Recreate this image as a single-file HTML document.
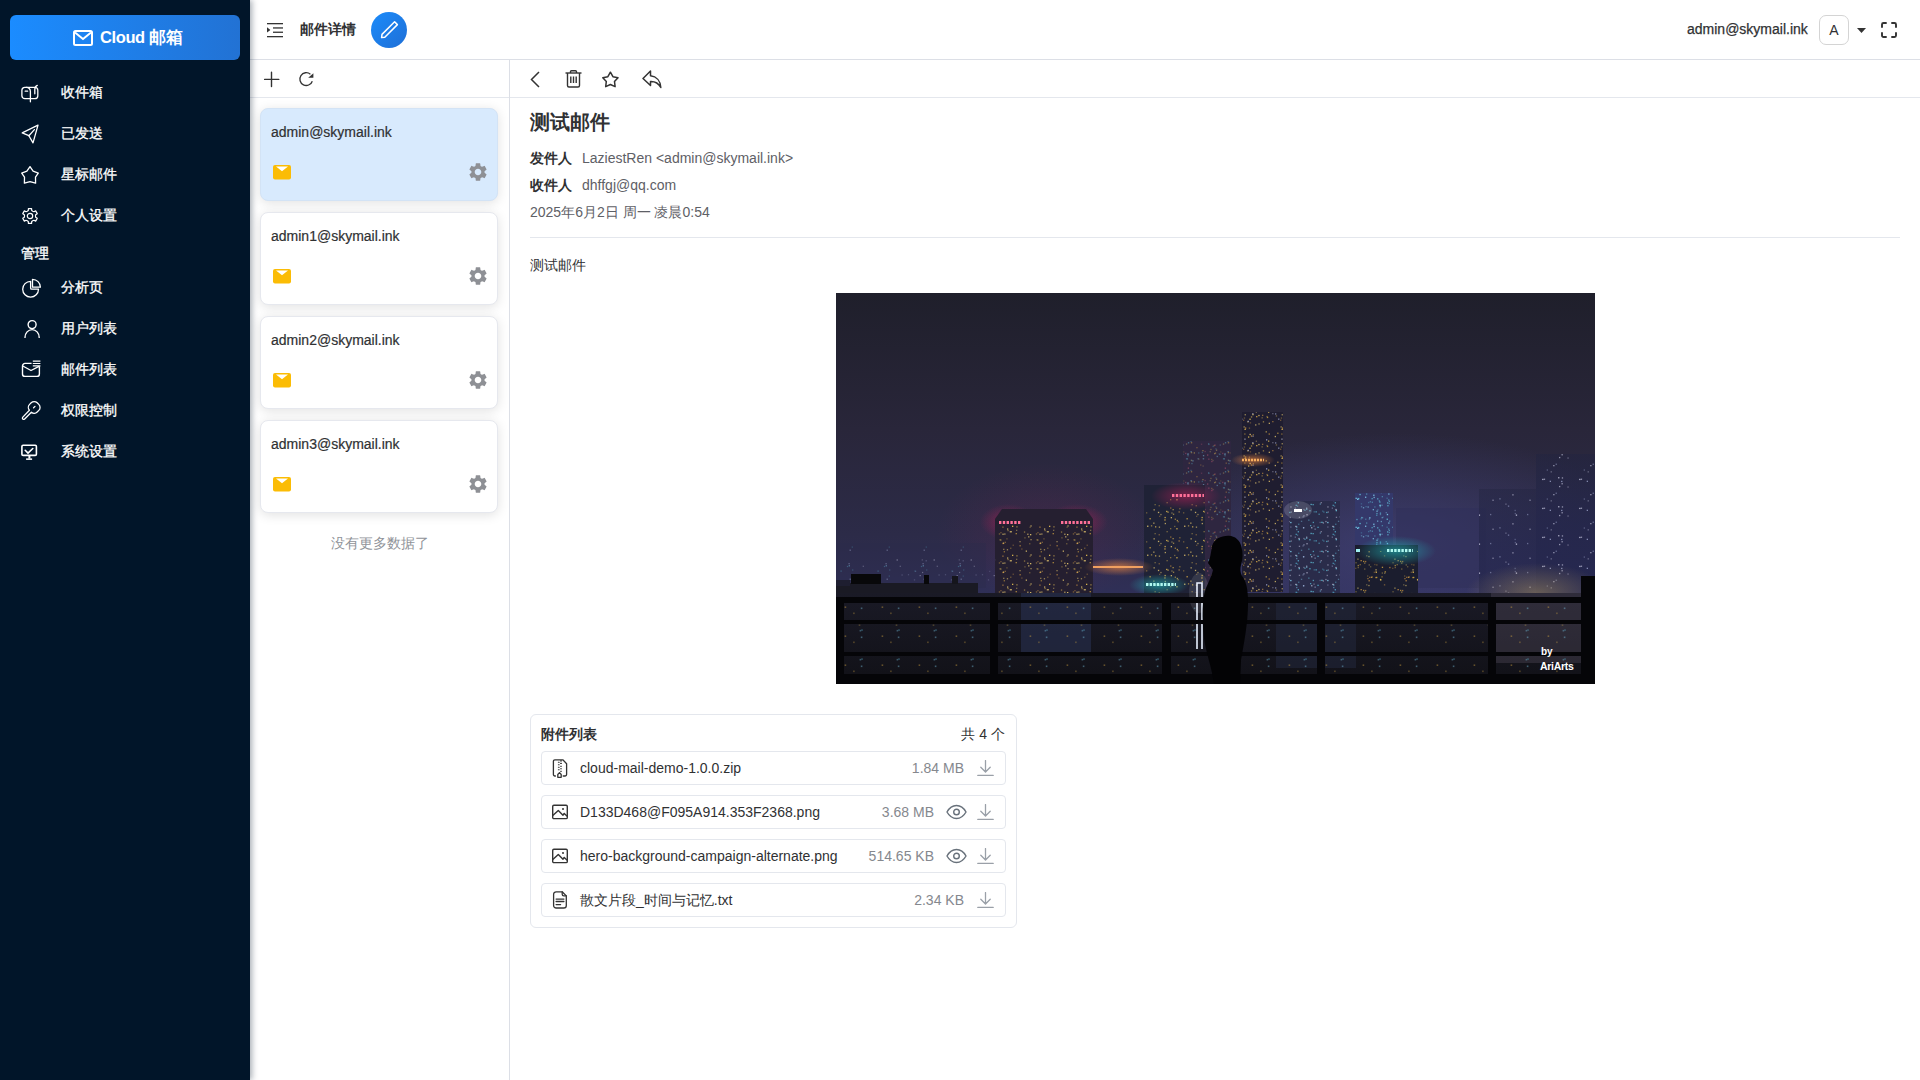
<!DOCTYPE html>
<html><head><meta charset="utf-8">
<style>
*{box-sizing:border-box;margin:0;padding:0}
html,body{width:1920px;height:1080px;overflow:hidden;background:#fff;font-family:"Liberation Sans",sans-serif;color:#303133}
.abs{position:absolute}
#side{position:absolute;left:0;top:0;width:250px;height:1080px;background:#011529;z-index:5;box-shadow:2px 0 6px rgba(0,21,41,.35)}
#logo{position:absolute;left:10px;top:15px;width:230px;height:45px;border-radius:6px;background:linear-gradient(90deg,#1b8cff,#2272d4);color:#fff;font-weight:bold;font-size:18px}
.mi{position:absolute;left:0;width:250px;height:41px;color:#fff;font-size:14px;-webkit-text-stroke:.3px #fff}
.mi svg{position:absolute;left:21px;top:11px}
.mi span{position:absolute;left:61px;top:12px;line-height:16px}
#hdr{position:absolute;left:250px;top:0;width:1670px;height:60px;border-bottom:1px solid #dcdfe6;background:#fff}
#tb1{position:absolute;left:250px;top:60px;width:260px;height:38px;border-bottom:1px solid #e4e7ed}
#tb2{position:absolute;left:510px;top:60px;width:1410px;height:38px;border-bottom:1px solid #e4e7ed}
#vline{position:absolute;left:509px;top:60px;width:1px;height:1020px;background:#dcdfe6}
.card{position:absolute;left:260px;width:238px;height:93px;border-radius:8px;background:#fff;border:1px solid #e6e8ee;box-shadow:0 2px 12px rgba(0,0,0,.12)}
.card.sel{background:#d8eafd;border-color:#d3e3f5}
.card .t{position:absolute;left:10px;top:14px;font-size:14px;color:#303133;line-height:18px;-webkit-text-stroke:.2px #303133}
.card .env{position:absolute;left:12px;top:56px}
.card .gear{position:absolute;left:206px;top:52px}
.att{position:absolute;left:541px;width:465px;height:34px;border:1px solid #e4e7ed;border-radius:4px;font-size:14px;color:#303133}
.att .ic{position:absolute;left:10px;top:8px}
.att .n{position:absolute;left:38px;top:7px;line-height:18px}
.att .s{position:absolute;top:7px;line-height:18px;color:#85888e;text-align:right}
.att .dl{position:absolute;left:435px;top:8px}
.att .eye{position:absolute;left:404px;top:8px}
</style></head>
<body>
<div id="side">
  <div id="logo">
    <svg class="abs" style="left:63px;top:15px" width="20" height="16" viewBox="0 0 20 16"><rect x="1" y="1" width="18" height="14" rx="1.5" fill="none" stroke="#fff" stroke-width="2"/><path d="M2 2.5 L10 9 L18 2.5" fill="none" stroke="#fff" stroke-width="2"/></svg>
    <span class="abs" style="left:90px;top:12px;line-height:20px;font-size:16.5px;letter-spacing:-.4px">Cloud 邮箱</span>
  </div>
  <div class="mi" style="top:72px"><svg width="18" height="20" viewBox="0 0 18 20" fill="none" stroke="#fff" stroke-width="1.3" stroke-linecap="round"><rect x="0.9" y="4.3" width="15.9" height="11.4" rx="3"/><path d="M9.4 18.8V8.6A4 4 0 0 0 5.2 4.4"/><path d="M4.2 8.2h2.4"/><path d="M13.8 10.8V6.5C13.8 4.6 14.5 3.2 16.3 2.4"/></svg><span>收件箱</span></div>
  <div class="mi" style="top:113px"><svg width="18" height="20" viewBox="0 0 18 20" style="overflow:visible" fill="none" stroke="#fff" stroke-width="1.3" stroke-linejoin="round"><path d="M1.2 8.9L17 1.1L12 18.9L7.9 11.7Z"/><path d="M7.9 11.7L13.4 5.6" stroke-linecap="round"/></svg><span>已发送</span></div>
  <div class="mi" style="top:154px"><svg width="18" height="20" viewBox="0 0 18 20" style="overflow:visible" fill="none" stroke="#fff" stroke-width="1.3" stroke-linejoin="round"><path d="M9 1.6L12.1 6.2L17.3 8.1L14.5 12.2L14.6 18.2L9 16.6L3.4 18.2L3.5 12.2L0.7 8.1L5.9 6.2Z"/></svg><span>星标邮件</span></div>
  <div class="mi" style="top:195px"><svg width="18" height="20" viewBox="0 0 18 20" style="overflow:visible" fill="none" stroke="#fff" stroke-width="1.2" stroke-linejoin="round"><path d="M6.25 5.24 L7.30 4.45 L7.42 2.57 L10.58 2.57 L10.70 4.45 L11.75 5.24 L12.96 5.76 L14.65 4.91 L16.23 7.65 L14.65 8.70 L14.50 10.00 L14.65 11.30 L16.23 12.35 L14.65 15.09 L12.96 14.24 L11.75 14.76 L10.70 15.55 L10.58 17.43 L7.42 17.43 L7.30 15.55 L6.25 14.76 L5.04 14.24 L3.35 15.09 L1.77 12.35 L3.35 11.30 L3.50 10.00 L3.35 8.70 L1.77 7.65 L3.35 4.91 L5.04 5.76Z"/><circle cx="9" cy="10" r="2.7"/></svg><span>个人设置</span></div>
  <div class="abs" style="left:21px;top:246px;color:#fff;font-size:13.5px;line-height:16px;-webkit-text-stroke:.35px #fff">管理</div>
  <div class="mi" style="top:267px"><svg width="21" height="20" viewBox="0 0 21 20" style="overflow:visible" fill="none" stroke="#fff" stroke-width="1.3" stroke-linejoin="round"><path d="M9.6 3.3A7.9 7.9 0 1 0 17.5 11.2H10.8A1.2 1.2 0 0 1 9.6 10Z"/><path d="M11.5 9.2V1.3A7.9 7.9 0 0 1 19.4 9.2Z"/></svg><span>分析页</span></div>
  <div class="mi" style="top:308px"><svg width="20" height="20" viewBox="0 0 20 20" style="overflow:visible" fill="none" stroke="#fff" stroke-width="1.4" stroke-linecap="round"><circle cx="11.1" cy="5.6" r="4"/><path d="M4 18.4A7.1 7.8 0 0 1 18.2 18.4"/></svg><span>用户列表</span></div>
  <div class="mi" style="top:349px"><svg width="21" height="19" viewBox="0 0 21 19" style="overflow:visible" fill="none" stroke="#fff" stroke-width="1.4" stroke-linejoin="round"><path d="M10.6 3.4H4A2.5 2.5 0 0 0 1.5 5.9V13.9A2.5 2.5 0 0 0 4 16.4H15.9A2.5 2.5 0 0 0 18.4 13.9V6.2"/><path d="M1.8 6L10 10.5L18 6.3"/><path d="M11.8 1.2h7.6M11.8 3.5h7.6M11.8 5.8h7.6" stroke-width="1.2"/></svg><span>邮件列表</span></div>
  <div class="mi" style="top:390px"><svg width="20" height="20" viewBox="0 0 20 20" style="overflow:visible" fill="none" stroke="#fff" stroke-width="1.3" stroke-linejoin="round"><path d="M8.4 9.2A4.2 4.2 0 0 1 8.6 3.4L10.2 1.8A4.2 4.2 0 0 1 16.2 1.8L17.8 3.4A4.2 4.2 0 0 1 17.8 9.4L16.2 11A4.2 4.2 0 0 1 10.4 11.2L3.4 18.2A1.3 1.3 0 0 1 1.6 16.4Z"/><path d="M12.6 6.8L14 5.4" stroke-linecap="round"/></svg><span>权限控制</span></div>
  <div class="mi" style="top:431px"><svg width="18" height="19" viewBox="0 0 18 19" style="overflow:visible" fill="none" stroke="#fff" stroke-width="1.6" stroke-linejoin="round"><rect x="0.9" y="3.3" width="14.5" height="10.1" rx="1.2"/><path d="M4.2 8.3L7 11.1L11.8 6.5" stroke-linecap="round"/><path d="M7.4 14v2.6h2v-2.6z" fill="#fff" stroke="none"/><rect x="5.1" y="16.4" width="6" height="1.5" fill="#fff" stroke="none"/></svg><span>系统设置</span></div>
</div>


<div id="hdr">
  <svg class="abs" style="left:17px;top:22px" width="16" height="16" viewBox="0 0 16 16" fill="#333"><rect x="0" y="1" width="16" height="1.3"/><rect x="6" y="5.3" width="10" height="1.3"/><rect x="6" y="9.6" width="10" height="1.3"/><rect x="0" y="14" width="16" height="1.3"/><path d="M0 5.3 L3.4 7.9 L0 10.5z"/></svg>
  <div class="abs" style="left:50px;top:21px;font-size:14px;font-weight:bold;line-height:16px;color:#303133">邮件详情</div>
  <div class="abs" style="left:121px;top:12px;width:36px;height:36px;border-radius:50%;background:linear-gradient(135deg,#1b8bfa,#1f6fd6)">
    <svg class="abs" style="left:9px;top:8px" width="19" height="19" viewBox="0 0 19 19" fill="none" stroke="#fff" stroke-width="1.5" stroke-linejoin="round"><path d="M1.6 17.6L2 14.4L14.6 1.8L17.4 4.6L4.8 17.2Z"/></svg>
  </div>
  <div class="abs" style="left:1437px;top:21px;font-size:14px;line-height:17px;color:#303133;-webkit-text-stroke:0.25px #303133">admin@skymail.ink</div>
  <div class="abs" style="left:1569px;top:15px;width:30px;height:30px;border:1px solid #d4d4d4;border-radius:7px;font-size:14px;line-height:28px;text-align:center;color:#303133">A</div>
  <svg class="abs" style="left:1607px;top:28px" width="9" height="5" viewBox="0 0 9 5"><path d="M0 0h9L4.5 5z" fill="#333"/></svg>
  <svg class="abs" style="left:1631px;top:22px" width="16" height="16" viewBox="0 0 16 16" fill="none" stroke="#333" stroke-width="1.9" stroke-linecap="round"><path d="M1 5V2.5A1.5 1.5 0 0 1 2.5 1H5M11 1h2.5A1.5 1.5 0 0 1 15 2.5V5M15 11v2.5a1.5 1.5 0 0 1-1.5 1.5H11M5 15H2.5A1.5 1.5 0 0 1 1 13.5V11"/></svg>
</div>
<div id="tb1">
  <svg class="abs" style="left:14px;top:11px" width="16" height="17" viewBox="0 0 16 17" stroke="#333" stroke-width="1.4" stroke-linecap="round"><path d="M7.5 1.2v14.4M0.6 8.4h14.2"/></svg>
  <svg class="abs" style="left:48px;top:11px" width="18" height="17" viewBox="0 0 18 17" fill="none" stroke="#333" stroke-width="1.3"><path d="M14.3 10.2A6.4 6.4 0 1 1 12.4 3.2"/><path d="M15.4 2.2v4.6h-5.2z" fill="#333" stroke="none"/></svg>
</div>
<div id="tb2">
  <svg class="abs" style="left:20px;top:11px" width="10" height="17" viewBox="0 0 10 17" fill="none" stroke="#333" stroke-width="1.5"><path d="M9 1L1.5 8.5L9 16"/></svg>
  <svg class="abs" style="left:55px;top:10px" width="17" height="18" viewBox="0 0 17 18" fill="none" stroke="#333" stroke-width="1.4" stroke-linejoin="round"><path d="M0.5 3h16"/><path d="M5.5 3V1.8a1 1 0 0 1 1-1h4a1 1 0 0 1 1 1V3"/><path d="M2.5 3v12.5a1.5 1.5 0 0 0 1.5 1.5h9a1.5 1.5 0 0 0 1.5-1.5V3"/><path d="M5.8 6.5v6.5M8.5 6.5v6.5M11.2 6.5v6.5"/></svg>
  <svg class="abs" style="left:91px;top:10px" width="19" height="19" viewBox="0 0 19 19" fill="none" stroke="#333" stroke-width="1.5" stroke-linejoin="round" style="overflow:visible"><path d="M9.40 2.20 L11.93 6.72 L17.01 7.73 L13.49 11.53 L14.10 16.67 L9.40 14.50 L4.70 16.67 L5.31 11.53 L1.79 7.73 L6.87 6.72Z"/></svg>
  <svg class="abs" style="left:132px;top:10px" width="20" height="19" viewBox="0 0 20 19" fill="none" stroke="#333" stroke-width="1.5" stroke-linejoin="round"><path d="M8.5 1L1 8.5L8.5 15.5V11.5C13.5 11.3 16.5 13.2 18.8 17.5C18.5 11 14.5 6.5 8.5 5.8Z"/></svg>
</div>

<div id="vline"></div>
<div class="card sel" style="top:108px"><div class="t">admin@skymail.ink</div><svg class="env" width="18" height="15" viewBox="0 0 18 15"><rect x="0" y="0" width="18" height="14.5" rx="2" fill="#fbbc05"/><path d="M3 1.5h12L9 6.3z" fill="#fff"/></svg><svg class="gear" width="22" height="22" viewBox="0 0 24 24"><path fill="#8e9095" d="M19.14 12.94c.04-.3.06-.61.06-.94 0-.32-.02-.64-.07-.94l2.03-1.58a.49.49 0 0 0 .12-.61l-1.92-3.32a.488.488 0 0 0-.59-.22l-2.39.96c-.5-.38-1.03-.7-1.62-.94l-.36-2.54a.484.484 0 0 0-.48-.41h-3.84c-.24 0-.43.17-.47.41l-.36 2.54c-.59.24-1.13.57-1.62.94l-2.39-.96c-.22-.08-.47 0-.59.22L2.74 8.87c-.12.21-.08.47.12.61l2.03 1.58c-.05.3-.09.63-.09.94s.02.64.07.94l-2.03 1.58a.49.49 0 0 0-.12.61l1.92 3.32c.12.22.37.29.59.22l2.39-.96c.5.38 1.03.7 1.62.94l.36 2.54c.05.24.24.41.48.41h3.84c.24 0 .44-.17.47-.41l.36-2.54c.59-.24 1.13-.56 1.62-.94l2.39.96c.22.08.47 0 .59-.22l1.92-3.32c.12-.22.07-.47-.12-.61l-2.01-1.58zM12 15.6c-1.98 0-3.6-1.62-3.6-3.6s1.62-3.6 3.6-3.6 3.6 1.62 3.6 3.6-1.62 3.6-3.6 3.6z"/></svg></div>
<div class="card" style="top:212px"><div class="t">admin1@skymail.ink</div><svg class="env" width="18" height="15" viewBox="0 0 18 15"><rect x="0" y="0" width="18" height="14.5" rx="2" fill="#fbbc05"/><path d="M3 1.5h12L9 6.3z" fill="#fff"/></svg><svg class="gear" width="22" height="22" viewBox="0 0 24 24"><path fill="#8e9095" d="M19.14 12.94c.04-.3.06-.61.06-.94 0-.32-.02-.64-.07-.94l2.03-1.58a.49.49 0 0 0 .12-.61l-1.92-3.32a.488.488 0 0 0-.59-.22l-2.39.96c-.5-.38-1.03-.7-1.62-.94l-.36-2.54a.484.484 0 0 0-.48-.41h-3.84c-.24 0-.43.17-.47.41l-.36 2.54c-.59.24-1.13.57-1.62.94l-2.39-.96c-.22-.08-.47 0-.59.22L2.74 8.87c-.12.21-.08.47.12.61l2.03 1.58c-.05.3-.09.63-.09.94s.02.64.07.94l-2.03 1.58a.49.49 0 0 0-.12.61l1.92 3.32c.12.22.37.29.59.22l2.39-.96c.5.38 1.03.7 1.62.94l.36 2.54c.05.24.24.41.48.41h3.84c.24 0 .44-.17.47-.41l.36-2.54c.59-.24 1.13-.56 1.62-.94l2.39.96c.22.08.47 0 .59-.22l1.92-3.32c.12-.22.07-.47-.12-.61l-2.01-1.58zM12 15.6c-1.98 0-3.6-1.62-3.6-3.6s1.62-3.6 3.6-3.6 3.6 1.62 3.6 3.6-1.62 3.6-3.6 3.6z"/></svg></div>
<div class="card" style="top:316px"><div class="t">admin2@skymail.ink</div><svg class="env" width="18" height="15" viewBox="0 0 18 15"><rect x="0" y="0" width="18" height="14.5" rx="2" fill="#fbbc05"/><path d="M3 1.5h12L9 6.3z" fill="#fff"/></svg><svg class="gear" width="22" height="22" viewBox="0 0 24 24"><path fill="#8e9095" d="M19.14 12.94c.04-.3.06-.61.06-.94 0-.32-.02-.64-.07-.94l2.03-1.58a.49.49 0 0 0 .12-.61l-1.92-3.32a.488.488 0 0 0-.59-.22l-2.39.96c-.5-.38-1.03-.7-1.62-.94l-.36-2.54a.484.484 0 0 0-.48-.41h-3.84c-.24 0-.43.17-.47.41l-.36 2.54c-.59.24-1.13.57-1.62.94l-2.39-.96c-.22-.08-.47 0-.59.22L2.74 8.87c-.12.21-.08.47.12.61l2.03 1.58c-.05.3-.09.63-.09.94s.02.64.07.94l-2.03 1.58a.49.49 0 0 0-.12.61l1.92 3.32c.12.22.37.29.59.22l2.39-.96c.5.38 1.03.7 1.62.94l.36 2.54c.05.24.24.41.48.41h3.84c.24 0 .44-.17.47-.41l.36-2.54c.59-.24 1.13-.56 1.62-.94l2.39.96c.22.08.47 0 .59-.22l1.92-3.32c.12-.22.07-.47-.12-.61l-2.01-1.58zM12 15.6c-1.98 0-3.6-1.62-3.6-3.6s1.62-3.6 3.6-3.6 3.6 1.62 3.6 3.6-1.62 3.6-3.6 3.6z"/></svg></div>
<div class="card" style="top:420px"><div class="t">admin3@skymail.ink</div><svg class="env" width="18" height="15" viewBox="0 0 18 15"><rect x="0" y="0" width="18" height="14.5" rx="2" fill="#fbbc05"/><path d="M3 1.5h12L9 6.3z" fill="#fff"/></svg><svg class="gear" width="22" height="22" viewBox="0 0 24 24"><path fill="#8e9095" d="M19.14 12.94c.04-.3.06-.61.06-.94 0-.32-.02-.64-.07-.94l2.03-1.58a.49.49 0 0 0 .12-.61l-1.92-3.32a.488.488 0 0 0-.59-.22l-2.39.96c-.5-.38-1.03-.7-1.62-.94l-.36-2.54a.484.484 0 0 0-.48-.41h-3.84c-.24 0-.43.17-.47.41l-.36 2.54c-.59.24-1.13.57-1.62.94l-2.39-.96c-.22-.08-.47 0-.59.22L2.74 8.87c-.12.21-.08.47.12.61l2.03 1.58c-.05.3-.09.63-.09.94s.02.64.07.94l-2.03 1.58a.49.49 0 0 0-.12.61l1.92 3.32c.12.22.37.29.59.22l2.39-.96c.5.38 1.03.7 1.62.94l.36 2.54c.05.24.24.41.48.41h3.84c.24 0 .44-.17.47-.41l.36-2.54c.59-.24 1.13-.56 1.62-.94l2.39.96c.22.08.47 0 .59-.22l1.92-3.32c.12-.22.07-.47-.12-.61l-2.01-1.58zM12 15.6c-1.98 0-3.6-1.62-3.6-3.6s1.62-3.6 3.6-3.6 3.6 1.62 3.6 3.6-1.62 3.6-3.6 3.6z"/></svg></div>
<div class="abs" style="left:250px;top:535px;width:260px;text-align:center;font-size:14px;line-height:16px;color:#909399">没有更多数据了</div>

<div class="abs" style="left:530px;top:110px;font-size:20px;font-weight:bold;line-height:24px;color:#303133">测试邮件</div>
<div class="abs" style="left:530px;top:149px;font-size:14px;line-height:18px"><b style="color:#303133">发件人</b><span style="position:absolute;left:52px;top:0;white-space:nowrap;color:#5e6066">LaziestRen &lt;admin@skymail.ink&gt;</span></div>
<div class="abs" style="left:530px;top:176px;font-size:14px;line-height:18px"><b style="color:#303133">收件人</b><span style="position:absolute;left:52px;top:0;white-space:nowrap;color:#5e6066">dhffgj@qq.com</span></div>
<div class="abs" style="left:530px;top:203px;font-size:14px;line-height:18px;color:#5e6066;white-space:nowrap">2025年6月2日 周一 凌晨0:54</div>
<div class="abs" style="left:530px;top:237px;width:1370px;height:1px;background:#e4e7ed"></div>
<div class="abs" style="left:530px;top:257px;font-size:14px;line-height:16px;color:#303133">测试邮件</div>
<div id="pic" class="abs" style="left:836px;top:293px;width:759px;height:391px;background:#222;overflow:hidden"><svg width="759" height="391" viewBox="0 0 759 391" style="display:block"><defs>
<linearGradient id="sky" x1="0" y1="0" x2="0" y2="1">
<stop offset="0" stop-color="#1f1f2b"/><stop offset=".35" stop-color="#29263a"/><stop offset=".62" stop-color="#2c2b48"/><stop offset=".8" stop-color="#30305a"/><stop offset="1" stop-color="#2a2a4a"/></linearGradient>
<radialGradient id="glowb" cx=".5" cy=".5" r=".5"><stop offset="0" stop-color="#4a4a8a" stop-opacity=".55"/><stop offset="1" stop-color="#4a4a8a" stop-opacity="0"/></radialGradient>
<radialGradient id="glowp" cx=".5" cy=".5" r=".5"><stop offset="0" stop-color="#c0205a" stop-opacity=".55"/><stop offset="1" stop-color="#c0205a" stop-opacity="0"/></radialGradient>
<radialGradient id="glowt" cx=".5" cy=".5" r=".5"><stop offset="0" stop-color="#20c0c0" stop-opacity=".6"/><stop offset="1" stop-color="#20c0c0" stop-opacity="0"/></radialGradient>
<radialGradient id="glowo" cx=".5" cy=".5" r=".5"><stop offset="0" stop-color="#ff9040" stop-opacity=".6"/><stop offset="1" stop-color="#ff9040" stop-opacity="0"/></radialGradient>
<radialGradient id="glowy" cx=".5" cy=".5" r=".5"><stop offset="0" stop-color="#d0b060" stop-opacity=".55"/><stop offset="1" stop-color="#d0b060" stop-opacity="0"/></radialGradient>
<radialGradient id="glowdark" cx=".5" cy=".5" r=".5"><stop offset="0" stop-color="#000" stop-opacity="0"/><stop offset="1" stop-color="#000" stop-opacity=".25"/></radialGradient>
<linearGradient id="lowcity" x1="0" y1="0" x2="0" y2="1"><stop offset="0" stop-color="#1a1a26"/><stop offset="1" stop-color="#111117"/></linearGradient>
<linearGradient id="mist" x1="0" y1="0" x2="0" y2="1"><stop offset="0" stop-color="#3a3a6a" stop-opacity="0"/><stop offset="1" stop-color="#3a3a6a" stop-opacity=".5"/></linearGradient>
<linearGradient id="bh" x1="0" y1="0" x2="0" y2="1"><stop offset="0" stop-color="#222440" stop-opacity=".55"/><stop offset=".5" stop-color="#24264a" stop-opacity=".85"/><stop offset="1" stop-color="#262850"/></linearGradient>
<pattern id="p0" width="37" height="29" patternUnits="userSpaceOnUse"><rect x="11.6" y="4.2" width="1.3" height="1.3" fill="#c8c8e0" opacity="0.39"/><rect x="19.1" y="10.1" width="1.3" height="1.3" fill="#c8c8e0" opacity="0.85"/><rect x="7.7" y="2.4" width="1.3" height="1.3" fill="#a0a8d0" opacity="0.39"/><rect x="3.2" y="11.8" width="1.3" height="1.3" fill="#c8c8e0" opacity="0.87"/><rect x="22.5" y="16.1" width="1.3" height="1.3" fill="#c8c8e0" opacity="0.67"/><rect x="14.2" y="27.0" width="1.3" height="1.3" fill="#c8c8e0" opacity="0.66"/><rect x="4.8" y="11.6" width="1.3" height="1.3" fill="#c8c8e0" opacity="0.66"/><rect x="20.0" y="18.9" width="1.3" height="1.3" fill="#c8c8e0" opacity="0.67"/><rect x="22.8" y="10.3" width="1.3" height="1.3" fill="#c8c8e0" opacity="0.66"/><rect x="22.1" y="13.8" width="1.3" height="1.3" fill="#a0a8d0" opacity="0.78"/><rect x="16.6" y="25.6" width="1.3" height="1.3" fill="#a0a8d0" opacity="0.51"/><rect x="28.4" y="19.4" width="1.3" height="1.3" fill="#c8c8e0" opacity="0.40"/><rect x="10.7" y="13.7" width="1.3" height="1.3" fill="#a0a8d0" opacity="0.75"/></pattern><pattern id="p1" width="37" height="29" patternUnits="userSpaceOnUse"><rect x="10.3" y="27.2" width="1.3" height="1.3" fill="#c8c8e0" opacity="0.63"/><rect x="5.9" y="9.5" width="1.3" height="1.3" fill="#a0a8d0" opacity="0.58"/><rect x="34.3" y="2.2" width="1.3" height="1.3" fill="#a0a8d0" opacity="0.54"/><rect x="12.5" y="13.8" width="1.3" height="1.3" fill="#a0a8d0" opacity="0.39"/><rect x="3.3" y="7.5" width="1.3" height="1.3" fill="#c8c8e0" opacity="0.38"/><rect x="25.0" y="17.9" width="1.3" height="1.3" fill="#a0a8d0" opacity="0.51"/><rect x="13.8" y="18.5" width="1.3" height="1.3" fill="#c8c8e0" opacity="0.87"/><rect x="12.7" y="16.9" width="1.3" height="1.3" fill="#a0a8d0" opacity="0.38"/><rect x="27.4" y="3.6" width="1.3" height="1.3" fill="#c8c8e0" opacity="0.57"/></pattern><pattern id="p2" width="37" height="29" patternUnits="userSpaceOnUse"><rect x="32.7" y="13.8" width="1.3" height="1.3" fill="#50a8c8" opacity="0.60"/><rect x="19.6" y="24.5" width="1.3" height="1.3" fill="#c89040" opacity="0.83"/><rect x="9.9" y="11.5" width="1.3" height="1.3" fill="#f0d070" opacity="0.73"/><rect x="13.6" y="6.4" width="1.3" height="1.3" fill="#80d0f0" opacity="0.45"/><rect x="8.3" y="6.5" width="1.3" height="1.3" fill="#e06080" opacity="0.81"/><rect x="6.5" y="7.8" width="1.3" height="1.3" fill="#50a8c8" opacity="0.58"/><rect x="13.2" y="15.7" width="1.3" height="1.3" fill="#50a8c8" opacity="0.73"/><rect x="18.4" y="17.1" width="1.3" height="1.3" fill="#60c8e0" opacity="0.60"/><rect x="31.1" y="26.4" width="1.3" height="1.3" fill="#c89040" opacity="0.57"/><rect x="14.1" y="13.3" width="1.3" height="1.3" fill="#c89040" opacity="0.38"/><rect x="2.4" y="5.8" width="1.3" height="1.3" fill="#50a8c8" opacity="0.41"/><rect x="21.4" y="2.8" width="1.3" height="1.3" fill="#50a8c8" opacity="0.65"/><rect x="33.9" y="17.0" width="1.3" height="1.3" fill="#80d0f0" opacity="0.83"/><rect x="21.9" y="4.1" width="1.3" height="1.3" fill="#d8a840" opacity="0.88"/><rect x="21.5" y="13.1" width="1.3" height="1.3" fill="#80d0f0" opacity="0.82"/><rect x="35.5" y="12.9" width="1.3" height="1.3" fill="#e06080" opacity="0.52"/><rect x="5.1" y="20.8" width="1.3" height="1.3" fill="#d8a840" opacity="0.61"/><rect x="24.7" y="14.3" width="1.3" height="1.3" fill="#e8c050" opacity="0.87"/><rect x="18.9" y="4.1" width="1.3" height="1.3" fill="#60c8e0" opacity="0.77"/><rect x="10.6" y="17.8" width="1.3" height="1.3" fill="#80d0f0" opacity="0.73"/><rect x="9.3" y="10.2" width="1.3" height="1.3" fill="#50a8c8" opacity="0.55"/><rect x="8.0" y="15.0" width="1.3" height="1.3" fill="#f0d070" opacity="0.70"/><rect x="21.9" y="21.8" width="1.3" height="1.3" fill="#e8c050" opacity="0.79"/><rect x="29.2" y="20.5" width="1.3" height="1.3" fill="#e8c050" opacity="0.46"/><rect x="17.6" y="20.2" width="1.3" height="1.3" fill="#60c8e0" opacity="0.78"/><rect x="16.9" y="5.4" width="1.3" height="1.3" fill="#f0d070" opacity="0.60"/><rect x="33.5" y="27.4" width="1.3" height="1.3" fill="#f0d070" opacity="0.39"/><rect x="3.6" y="13.0" width="1.3" height="1.3" fill="#f0d070" opacity="0.46"/><rect x="22.3" y="24.9" width="1.3" height="1.3" fill="#60c8e0" opacity="0.61"/><rect x="23.3" y="22.2" width="1.3" height="1.3" fill="#80d0f0" opacity="0.81"/><rect x="4.3" y="10.8" width="1.3" height="1.3" fill="#e8c050" opacity="0.61"/><rect x="6.4" y="21.9" width="1.3" height="1.3" fill="#f0d070" opacity="0.40"/><rect x="33.8" y="20.0" width="1.3" height="1.3" fill="#e06080" opacity="0.57"/><rect x="33.8" y="20.1" width="1.3" height="1.3" fill="#50a8c8" opacity="0.90"/><rect x="1.0" y="16.4" width="1.3" height="1.3" fill="#e06080" opacity="0.79"/><rect x="5.2" y="22.9" width="1.3" height="1.3" fill="#e06080" opacity="0.71"/><rect x="12.5" y="15.2" width="1.3" height="1.3" fill="#50a8c8" opacity="0.36"/><rect x="28.5" y="20.1" width="1.3" height="1.3" fill="#80d0f0" opacity="0.64"/><rect x="33.3" y="12.0" width="1.3" height="1.3" fill="#e8c050" opacity="0.80"/><rect x="7.5" y="7.0" width="1.3" height="1.3" fill="#d8a840" opacity="0.63"/><rect x="27.3" y="9.0" width="1.3" height="1.3" fill="#c89040" opacity="0.81"/><rect x="2.2" y="20.5" width="1.3" height="1.3" fill="#e06080" opacity="0.71"/><rect x="29.1" y="14.3" width="1.3" height="1.3" fill="#50a8c8" opacity="0.64"/><rect x="18.7" y="0.5" width="1.3" height="1.3" fill="#e06080" opacity="0.78"/><rect x="21.7" y="21.5" width="1.3" height="1.3" fill="#50a8c8" opacity="0.44"/><rect x="16.9" y="20.1" width="1.3" height="1.3" fill="#60c8e0" opacity="0.53"/><rect x="18.5" y="15.4" width="1.3" height="1.3" fill="#80d0f0" opacity="0.84"/><rect x="2.0" y="5.3" width="1.3" height="1.3" fill="#60c8e0" opacity="0.77"/><rect x="18.1" y="15.6" width="1.3" height="1.3" fill="#80d0f0" opacity="0.59"/><rect x="21.9" y="14.0" width="1.3" height="1.3" fill="#e8c050" opacity="0.73"/><rect x="16.1" y="14.8" width="1.3" height="1.3" fill="#e06080" opacity="0.63"/><rect x="8.8" y="14.5" width="1.3" height="1.3" fill="#d8a840" opacity="0.86"/><rect x="31.9" y="5.6" width="1.3" height="1.3" fill="#e06080" opacity="0.43"/></pattern><pattern id="p3" width="37" height="29" patternUnits="userSpaceOnUse"><rect x="4.3" y="12.2" width="1.3" height="1.3" fill="#e8c050" opacity="0.72"/><rect x="15.3" y="5.9" width="1.3" height="1.3" fill="#f0d070" opacity="0.78"/><rect x="32.0" y="4.3" width="1.3" height="1.3" fill="#a0a8d0" opacity="0.70"/><rect x="13.1" y="7.0" width="1.3" height="1.3" fill="#d8a840" opacity="0.88"/><rect x="7.8" y="26.4" width="1.3" height="1.3" fill="#c89040" opacity="0.84"/><rect x="5.8" y="18.5" width="1.3" height="1.3" fill="#d8a840" opacity="0.44"/><rect x="15.4" y="14.3" width="1.3" height="1.3" fill="#f0d070" opacity="0.58"/><rect x="12.7" y="2.6" width="1.3" height="1.3" fill="#f0d070" opacity="0.36"/><rect x="19.8" y="12.2" width="1.3" height="1.3" fill="#e8c050" opacity="0.56"/><rect x="18.5" y="8.2" width="1.3" height="1.3" fill="#e8c050" opacity="0.41"/><rect x="32.8" y="6.3" width="1.3" height="1.3" fill="#e8c050" opacity="0.40"/><rect x="9.7" y="25.1" width="1.3" height="1.3" fill="#d8a840" opacity="0.50"/><rect x="4.6" y="11.7" width="1.3" height="1.3" fill="#a0a8d0" opacity="0.80"/><rect x="9.2" y="4.1" width="1.3" height="1.3" fill="#c8c8e0" opacity="0.66"/><rect x="25.0" y="2.5" width="1.3" height="1.3" fill="#e8c050" opacity="0.79"/><rect x="6.5" y="24.8" width="1.3" height="1.3" fill="#f0d070" opacity="0.87"/><rect x="22.6" y="22.2" width="1.3" height="1.3" fill="#e8c050" opacity="0.68"/><rect x="7.9" y="7.3" width="1.3" height="1.3" fill="#e8c050" opacity="0.60"/><rect x="12.1" y="15.3" width="1.3" height="1.3" fill="#f0d070" opacity="0.69"/><rect x="1.5" y="19.7" width="1.3" height="1.3" fill="#e8c050" opacity="0.88"/><rect x="9.3" y="5.0" width="1.3" height="1.3" fill="#f0d070" opacity="0.70"/><rect x="19.0" y="5.7" width="1.3" height="1.3" fill="#c89040" opacity="0.63"/><rect x="6.4" y="9.6" width="1.3" height="1.3" fill="#e8c050" opacity="0.90"/><rect x="1.3" y="0.5" width="1.3" height="1.3" fill="#c8c8e0" opacity="0.65"/><rect x="6.8" y="13.2" width="1.3" height="1.3" fill="#c89040" opacity="0.41"/><rect x="29.2" y="12.0" width="1.3" height="1.3" fill="#c89040" opacity="0.65"/><rect x="31.7" y="26.9" width="1.3" height="1.3" fill="#f0d070" opacity="0.73"/><rect x="35.1" y="9.5" width="1.3" height="1.3" fill="#a0a8d0" opacity="0.75"/><rect x="5.0" y="27.4" width="1.3" height="1.3" fill="#e8c050" opacity="0.81"/><rect x="0.5" y="17.3" width="1.3" height="1.3" fill="#f0d070" opacity="0.59"/><rect x="2.0" y="18.4" width="1.3" height="1.3" fill="#c89040" opacity="0.83"/><rect x="23.9" y="7.8" width="1.3" height="1.3" fill="#d8a840" opacity="0.73"/><rect x="1.6" y="5.1" width="1.3" height="1.3" fill="#f0d070" opacity="0.60"/><rect x="9.4" y="26.6" width="1.3" height="1.3" fill="#c8c8e0" opacity="0.53"/><rect x="1.2" y="24.4" width="1.3" height="1.3" fill="#d8a840" opacity="0.55"/><rect x="0.0" y="10.6" width="1.3" height="1.3" fill="#c89040" opacity="0.50"/><rect x="23.4" y="6.9" width="1.3" height="1.3" fill="#e8c050" opacity="0.40"/><rect x="29.2" y="4.0" width="1.3" height="1.3" fill="#c8c8e0" opacity="0.37"/><rect x="0.8" y="8.4" width="1.3" height="1.3" fill="#d8a840" opacity="0.40"/><rect x="34.2" y="23.6" width="1.3" height="1.3" fill="#d8a840" opacity="0.71"/><rect x="25.6" y="24.4" width="1.3" height="1.3" fill="#c89040" opacity="0.77"/><rect x="25.7" y="13.7" width="1.3" height="1.3" fill="#f0d070" opacity="0.75"/><rect x="23.0" y="1.2" width="1.3" height="1.3" fill="#a0a8d0" opacity="0.84"/></pattern><pattern id="p4" width="37" height="29" patternUnits="userSpaceOnUse"><rect x="22.4" y="20.3" width="1.3" height="1.3" fill="#a0a8d0" opacity="0.43"/><rect x="18.7" y="14.0" width="1.3" height="1.3" fill="#60c8e0" opacity="0.80"/><rect x="20.9" y="24.7" width="1.3" height="1.3" fill="#80d0f0" opacity="0.40"/><rect x="1.5" y="17.6" width="1.3" height="1.3" fill="#60c8e0" opacity="0.56"/><rect x="16.1" y="1.4" width="1.3" height="1.3" fill="#60c8e0" opacity="0.69"/><rect x="24.3" y="13.6" width="1.3" height="1.3" fill="#60c8e0" opacity="0.60"/><rect x="2.5" y="25.8" width="1.3" height="1.3" fill="#a0a8d0" opacity="0.40"/><rect x="18.8" y="20.7" width="1.3" height="1.3" fill="#c8c8e0" opacity="0.49"/><rect x="2.7" y="7.4" width="1.3" height="1.3" fill="#80d0f0" opacity="0.48"/><rect x="23.2" y="12.8" width="1.3" height="1.3" fill="#c8c8e0" opacity="0.39"/><rect x="32.5" y="8.0" width="1.3" height="1.3" fill="#60c8e0" opacity="0.69"/><rect x="22.9" y="2.1" width="1.3" height="1.3" fill="#80d0f0" opacity="0.53"/><rect x="23.3" y="19.2" width="1.3" height="1.3" fill="#a0a8d0" opacity="0.66"/><rect x="0.4" y="1.7" width="1.3" height="1.3" fill="#50a8c8" opacity="0.88"/><rect x="3.6" y="6.0" width="1.3" height="1.3" fill="#c8c8e0" opacity="0.51"/><rect x="18.4" y="12.9" width="1.3" height="1.3" fill="#c8c8e0" opacity="0.77"/><rect x="35.5" y="15.2" width="1.3" height="1.3" fill="#50a8c8" opacity="0.89"/><rect x="33.4" y="0.5" width="1.3" height="1.3" fill="#c8c8e0" opacity="0.39"/><rect x="18.1" y="27.6" width="1.3" height="1.3" fill="#50a8c8" opacity="0.56"/><rect x="32.7" y="25.8" width="1.3" height="1.3" fill="#60c8e0" opacity="0.67"/><rect x="5.1" y="14.5" width="1.3" height="1.3" fill="#50a8c8" opacity="0.42"/><rect x="29.3" y="14.1" width="1.3" height="1.3" fill="#60c8e0" opacity="0.74"/><rect x="8.3" y="24.9" width="1.3" height="1.3" fill="#c8c8e0" opacity="0.57"/><rect x="5.7" y="26.3" width="1.3" height="1.3" fill="#c8c8e0" opacity="0.57"/><rect x="26.0" y="11.5" width="1.3" height="1.3" fill="#c8c8e0" opacity="0.52"/><rect x="30.0" y="0.0" width="1.3" height="1.3" fill="#50a8c8" opacity="0.81"/><rect x="4.3" y="25.7" width="1.3" height="1.3" fill="#60c8e0" opacity="0.85"/><rect x="10.3" y="10.3" width="1.3" height="1.3" fill="#c8c8e0" opacity="0.56"/><rect x="31.1" y="2.1" width="1.3" height="1.3" fill="#c8c8e0" opacity="0.77"/><rect x="30.5" y="7.8" width="1.3" height="1.3" fill="#60c8e0" opacity="0.81"/><rect x="10.2" y="25.9" width="1.3" height="1.3" fill="#80d0f0" opacity="0.88"/><rect x="15.6" y="8.7" width="1.3" height="1.3" fill="#50a8c8" opacity="0.78"/><rect x="15.3" y="0.8" width="1.3" height="1.3" fill="#c8c8e0" opacity="0.85"/><rect x="33.6" y="15.2" width="1.3" height="1.3" fill="#60c8e0" opacity="0.38"/><rect x="26.1" y="12.5" width="1.3" height="1.3" fill="#80d0f0" opacity="0.70"/><rect x="10.2" y="1.4" width="1.3" height="1.3" fill="#a0a8d0" opacity="0.42"/><rect x="16.9" y="9.5" width="1.3" height="1.3" fill="#50a8c8" opacity="0.49"/><rect x="26.4" y="18.1" width="1.3" height="1.3" fill="#c8c8e0" opacity="0.71"/><rect x="10.7" y="15.4" width="1.3" height="1.3" fill="#c8c8e0" opacity="0.42"/><rect x="23.0" y="2.1" width="1.3" height="1.3" fill="#a0a8d0" opacity="0.85"/><rect x="17.7" y="6.1" width="1.3" height="1.3" fill="#50a8c8" opacity="0.90"/><rect x="16.1" y="3.9" width="1.3" height="1.3" fill="#80d0f0" opacity="0.48"/><rect x="6.2" y="15.4" width="1.3" height="1.3" fill="#50a8c8" opacity="0.48"/><rect x="9.2" y="15.8" width="1.3" height="1.3" fill="#60c8e0" opacity="0.76"/><rect x="14.7" y="11.5" width="1.3" height="1.3" fill="#a0a8d0" opacity="0.47"/><rect x="9.6" y="20.8" width="1.3" height="1.3" fill="#c8c8e0" opacity="0.50"/><rect x="34.5" y="3.5" width="1.3" height="1.3" fill="#a0a8d0" opacity="0.64"/><rect x="28.2" y="23.5" width="1.3" height="1.3" fill="#60c8e0" opacity="0.50"/></pattern><pattern id="p5" width="37" height="29" patternUnits="userSpaceOnUse"><rect x="8.9" y="11.1" width="1.3" height="1.3" fill="#80d0f0" opacity="0.59"/><rect x="11.1" y="22.6" width="1.3" height="1.3" fill="#60c8e0" opacity="0.42"/><rect x="15.2" y="21.2" width="1.3" height="1.3" fill="#80d0f0" opacity="0.88"/><rect x="17.5" y="2.0" width="1.3" height="1.3" fill="#50a8c8" opacity="0.82"/><rect x="34.7" y="6.9" width="1.3" height="1.3" fill="#60c8e0" opacity="0.47"/><rect x="5.4" y="26.9" width="1.3" height="1.3" fill="#60c8e0" opacity="0.87"/><rect x="25.8" y="17.9" width="1.3" height="1.3" fill="#80d0f0" opacity="0.40"/><rect x="27.7" y="0.0" width="1.3" height="1.3" fill="#60c8e0" opacity="0.48"/><rect x="32.8" y="17.9" width="1.3" height="1.3" fill="#80d0f0" opacity="0.88"/><rect x="22.4" y="14.6" width="1.3" height="1.3" fill="#80d0f0" opacity="0.73"/><rect x="4.0" y="1.9" width="1.3" height="1.3" fill="#50a8c8" opacity="0.87"/><rect x="6.8" y="7.2" width="1.3" height="1.3" fill="#50a8c8" opacity="0.35"/><rect x="19.2" y="27.6" width="1.3" height="1.3" fill="#80d0f0" opacity="0.88"/><rect x="23.0" y="24.5" width="1.3" height="1.3" fill="#80d0f0" opacity="0.64"/><rect x="19.5" y="0.8" width="1.3" height="1.3" fill="#80d0f0" opacity="0.74"/><rect x="11.0" y="0.6" width="1.3" height="1.3" fill="#80d0f0" opacity="0.84"/><rect x="23.1" y="2.2" width="1.3" height="1.3" fill="#60c8e0" opacity="0.72"/><rect x="33.0" y="6.3" width="1.3" height="1.3" fill="#60c8e0" opacity="0.73"/><rect x="25.6" y="10.0" width="1.3" height="1.3" fill="#80d0f0" opacity="0.46"/><rect x="28.5" y="20.5" width="1.3" height="1.3" fill="#50a8c8" opacity="0.39"/><rect x="17.7" y="5.6" width="1.3" height="1.3" fill="#60c8e0" opacity="0.48"/><rect x="7.9" y="21.1" width="1.3" height="1.3" fill="#80d0f0" opacity="0.41"/><rect x="22.3" y="16.9" width="1.3" height="1.3" fill="#60c8e0" opacity="0.62"/><rect x="32.5" y="1.6" width="1.3" height="1.3" fill="#50a8c8" opacity="0.43"/><rect x="14.0" y="5.9" width="1.3" height="1.3" fill="#50a8c8" opacity="0.43"/><rect x="1.9" y="1.7" width="1.3" height="1.3" fill="#80d0f0" opacity="0.60"/><rect x="25.4" y="8.7" width="1.3" height="1.3" fill="#60c8e0" opacity="0.90"/><rect x="33.3" y="9.1" width="1.3" height="1.3" fill="#60c8e0" opacity="0.71"/><rect x="18.7" y="13.0" width="1.3" height="1.3" fill="#80d0f0" opacity="0.72"/><rect x="13.5" y="10.4" width="1.3" height="1.3" fill="#80d0f0" opacity="0.59"/><rect x="3.9" y="2.2" width="1.3" height="1.3" fill="#60c8e0" opacity="0.54"/><rect x="34.1" y="3.4" width="1.3" height="1.3" fill="#60c8e0" opacity="0.56"/><rect x="27.4" y="8.6" width="1.3" height="1.3" fill="#80d0f0" opacity="0.40"/><rect x="25.2" y="5.4" width="1.3" height="1.3" fill="#50a8c8" opacity="0.86"/><rect x="6.9" y="10.1" width="1.3" height="1.3" fill="#80d0f0" opacity="0.37"/><rect x="14.7" y="22.5" width="1.3" height="1.3" fill="#80d0f0" opacity="0.37"/><rect x="1.2" y="1.7" width="1.3" height="1.3" fill="#60c8e0" opacity="0.49"/><rect x="26.7" y="24.9" width="1.3" height="1.3" fill="#80d0f0" opacity="0.55"/><rect x="12.0" y="26.4" width="1.3" height="1.3" fill="#60c8e0" opacity="0.49"/><rect x="25.6" y="8.8" width="1.3" height="1.3" fill="#80d0f0" opacity="0.51"/><rect x="25.8" y="16.5" width="1.3" height="1.3" fill="#50a8c8" opacity="0.87"/><rect x="2.3" y="22.9" width="1.3" height="1.3" fill="#60c8e0" opacity="0.61"/><rect x="34.2" y="26.4" width="1.3" height="1.3" fill="#80d0f0" opacity="0.78"/><rect x="32.6" y="22.6" width="1.3" height="1.3" fill="#60c8e0" opacity="0.86"/><rect x="6.5" y="22.2" width="1.3" height="1.3" fill="#50a8c8" opacity="0.52"/><rect x="24.7" y="4.2" width="1.3" height="1.3" fill="#60c8e0" opacity="0.53"/><rect x="11.4" y="10.0" width="1.3" height="1.3" fill="#50a8c8" opacity="0.39"/><rect x="7.0" y="20.9" width="1.3" height="1.3" fill="#60c8e0" opacity="0.57"/><rect x="23.2" y="13.3" width="1.3" height="1.3" fill="#50a8c8" opacity="0.53"/><rect x="35.0" y="24.5" width="1.3" height="1.3" fill="#60c8e0" opacity="0.50"/><rect x="3.0" y="2.7" width="1.3" height="1.3" fill="#80d0f0" opacity="0.89"/><rect x="34.7" y="4.8" width="1.3" height="1.3" fill="#60c8e0" opacity="0.58"/><rect x="22.1" y="18.7" width="1.3" height="1.3" fill="#50a8c8" opacity="0.65"/><rect x="27.6" y="21.0" width="1.3" height="1.3" fill="#80d0f0" opacity="0.51"/><rect x="20.2" y="10.3" width="1.3" height="1.3" fill="#50a8c8" opacity="0.49"/><rect x="15.7" y="5.1" width="1.3" height="1.3" fill="#60c8e0" opacity="0.43"/><rect x="31.6" y="16.0" width="1.3" height="1.3" fill="#80d0f0" opacity="0.39"/></pattern><pattern id="p6" width="37" height="29" patternUnits="userSpaceOnUse"><rect x="9.0" y="6.8" width="1.3" height="1.3" fill="#d8a840" opacity="0.71"/><rect x="3.6" y="12.9" width="1.3" height="1.3" fill="#e8c050" opacity="0.41"/><rect x="16.9" y="22.7" width="1.3" height="1.3" fill="#c89040" opacity="0.85"/><rect x="1.4" y="8.1" width="1.3" height="1.3" fill="#e8c050" opacity="0.38"/><rect x="21.4" y="22.9" width="1.3" height="1.3" fill="#d8a840" opacity="0.86"/><rect x="13.3" y="24.0" width="1.3" height="1.3" fill="#c89040" opacity="0.68"/><rect x="27.7" y="18.4" width="1.3" height="1.3" fill="#e8c050" opacity="0.41"/><rect x="21.3" y="17.2" width="1.3" height="1.3" fill="#d8a840" opacity="0.37"/><rect x="12.1" y="1.2" width="1.3" height="1.3" fill="#f0d070" opacity="0.37"/><rect x="26.1" y="25.3" width="1.3" height="1.3" fill="#e8c050" opacity="0.80"/><rect x="14.6" y="10.3" width="1.3" height="1.3" fill="#f0d070" opacity="0.39"/><rect x="1.1" y="13.7" width="1.3" height="1.3" fill="#c89040" opacity="0.38"/><rect x="3.6" y="10.9" width="1.3" height="1.3" fill="#d8a840" opacity="0.70"/><rect x="3.3" y="4.5" width="1.3" height="1.3" fill="#f0d070" opacity="0.58"/><rect x="10.1" y="8.5" width="1.3" height="1.3" fill="#e8c050" opacity="0.52"/><rect x="20.2" y="9.9" width="1.3" height="1.3" fill="#c89040" opacity="0.36"/><rect x="27.4" y="22.2" width="1.3" height="1.3" fill="#d8a840" opacity="0.56"/><rect x="14.5" y="26.1" width="1.3" height="1.3" fill="#c89040" opacity="0.85"/><rect x="15.1" y="22.7" width="1.3" height="1.3" fill="#c89040" opacity="0.67"/><rect x="13.0" y="21.4" width="1.3" height="1.3" fill="#d8a840" opacity="0.36"/><rect x="19.7" y="17.7" width="1.3" height="1.3" fill="#c89040" opacity="0.40"/><rect x="22.2" y="10.3" width="1.3" height="1.3" fill="#d8a840" opacity="0.43"/><rect x="10.1" y="14.4" width="1.3" height="1.3" fill="#e8c050" opacity="0.41"/><rect x="17.5" y="22.3" width="1.3" height="1.3" fill="#d8a840" opacity="0.52"/><rect x="29.9" y="1.2" width="1.3" height="1.3" fill="#c89040" opacity="0.52"/><rect x="21.7" y="17.6" width="1.3" height="1.3" fill="#e8c050" opacity="0.85"/><rect x="22.1" y="22.8" width="1.3" height="1.3" fill="#d8a840" opacity="0.70"/><rect x="30.6" y="17.2" width="1.3" height="1.3" fill="#d8a840" opacity="0.81"/><rect x="6.5" y="6.0" width="1.3" height="1.3" fill="#c89040" opacity="0.87"/><rect x="5.6" y="10.0" width="1.3" height="1.3" fill="#d8a840" opacity="0.49"/><rect x="25.9" y="24.9" width="1.3" height="1.3" fill="#e8c050" opacity="0.84"/><rect x="30.1" y="18.6" width="1.3" height="1.3" fill="#f0d070" opacity="0.41"/><rect x="21.4" y="15.2" width="1.3" height="1.3" fill="#f0d070" opacity="0.71"/><rect x="11.0" y="6.9" width="1.3" height="1.3" fill="#c89040" opacity="0.71"/><rect x="16.0" y="12.1" width="1.3" height="1.3" fill="#e8c050" opacity="0.35"/><rect x="35.2" y="12.9" width="1.3" height="1.3" fill="#c89040" opacity="0.77"/><rect x="27.8" y="12.7" width="1.3" height="1.3" fill="#d8a840" opacity="0.80"/><rect x="14.3" y="1.9" width="1.3" height="1.3" fill="#f0d070" opacity="0.59"/></pattern><pattern id="p7" width="37" height="29" patternUnits="userSpaceOnUse"><rect x="3.3" y="12.2" width="1.3" height="1.3" fill="#e8c050" opacity="0.37"/><rect x="4.7" y="25.5" width="1.3" height="1.3" fill="#f0d070" opacity="0.78"/><rect x="18.3" y="1.5" width="1.3" height="1.3" fill="#c89040" opacity="0.71"/><rect x="28.0" y="0.7" width="1.3" height="1.3" fill="#e8c050" opacity="0.90"/><rect x="26.1" y="22.6" width="1.3" height="1.3" fill="#d8a840" opacity="0.42"/><rect x="31.6" y="8.0" width="1.3" height="1.3" fill="#d8a840" opacity="0.73"/><rect x="25.7" y="6.1" width="1.3" height="1.3" fill="#f0d070" opacity="0.69"/><rect x="9.0" y="9.0" width="1.3" height="1.3" fill="#f0d070" opacity="0.85"/><rect x="16.3" y="7.0" width="1.3" height="1.3" fill="#c89040" opacity="0.46"/><rect x="9.4" y="14.0" width="1.3" height="1.3" fill="#f0d070" opacity="0.55"/><rect x="7.1" y="11.2" width="1.3" height="1.3" fill="#f0d070" opacity="0.72"/><rect x="32.0" y="4.7" width="1.3" height="1.3" fill="#f0d070" opacity="0.41"/><rect x="18.9" y="17.6" width="1.3" height="1.3" fill="#f0d070" opacity="0.88"/><rect x="16.2" y="14.4" width="1.3" height="1.3" fill="#e8c050" opacity="0.49"/><rect x="19.1" y="23.7" width="1.3" height="1.3" fill="#f0d070" opacity="0.50"/><rect x="35.4" y="16.0" width="1.3" height="1.3" fill="#f0d070" opacity="0.53"/><rect x="2.9" y="6.4" width="1.3" height="1.3" fill="#e8c050" opacity="0.51"/><rect x="18.4" y="8.6" width="1.3" height="1.3" fill="#f0d070" opacity="0.75"/><rect x="26.7" y="6.1" width="1.3" height="1.3" fill="#f0d070" opacity="0.69"/><rect x="15.4" y="14.2" width="1.3" height="1.3" fill="#e8c050" opacity="0.42"/><rect x="8.1" y="18.1" width="1.3" height="1.3" fill="#e8c050" opacity="0.38"/><rect x="20.2" y="8.4" width="1.3" height="1.3" fill="#f0d070" opacity="0.64"/><rect x="14.8" y="8.3" width="1.3" height="1.3" fill="#d8a840" opacity="0.46"/><rect x="22.3" y="13.2" width="1.3" height="1.3" fill="#d8a840" opacity="0.36"/><rect x="28.6" y="19.6" width="1.3" height="1.3" fill="#c89040" opacity="0.40"/><rect x="22.8" y="24.1" width="1.3" height="1.3" fill="#f0d070" opacity="0.57"/><rect x="9.4" y="0.3" width="1.3" height="1.3" fill="#f0d070" opacity="0.68"/><rect x="20.7" y="16.7" width="1.3" height="1.3" fill="#c89040" opacity="0.49"/><rect x="32.3" y="1.2" width="1.3" height="1.3" fill="#e8c050" opacity="0.57"/><rect x="8.5" y="1.6" width="1.3" height="1.3" fill="#e8c050" opacity="0.36"/><rect x="19.7" y="26.1" width="1.3" height="1.3" fill="#d8a840" opacity="0.58"/><rect x="18.5" y="17.8" width="1.3" height="1.3" fill="#c89040" opacity="0.80"/><rect x="6.2" y="8.6" width="1.3" height="1.3" fill="#f0d070" opacity="0.69"/><rect x="35.5" y="20.1" width="1.3" height="1.3" fill="#c89040" opacity="0.74"/><rect x="0.2" y="23.4" width="1.3" height="1.3" fill="#c89040" opacity="0.39"/><rect x="23.4" y="4.9" width="1.3" height="1.3" fill="#e8c050" opacity="0.49"/><rect x="23.0" y="3.4" width="1.3" height="1.3" fill="#f0d070" opacity="0.74"/></pattern><pattern id="p8" width="37" height="29" patternUnits="userSpaceOnUse"><rect x="9.5" y="15.3" width="1.3" height="1.3" fill="#c89040" opacity="0.73"/><rect x="32.7" y="26.9" width="1.3" height="1.3" fill="#f0d070" opacity="0.70"/><rect x="34.5" y="6.0" width="1.3" height="1.3" fill="#e8c050" opacity="0.44"/><rect x="32.3" y="23.3" width="1.3" height="1.3" fill="#d8a840" opacity="0.87"/><rect x="26.6" y="9.1" width="1.3" height="1.3" fill="#c89040" opacity="0.53"/><rect x="8.5" y="25.1" width="1.3" height="1.3" fill="#c89040" opacity="0.61"/><rect x="18.9" y="0.2" width="1.3" height="1.3" fill="#e8c050" opacity="0.59"/><rect x="25.9" y="15.8" width="1.3" height="1.3" fill="#f0d070" opacity="0.78"/><rect x="14.0" y="16.2" width="1.3" height="1.3" fill="#d8a840" opacity="0.43"/><rect x="1.0" y="3.0" width="1.3" height="1.3" fill="#d8a840" opacity="0.54"/><rect x="5.1" y="0.8" width="1.3" height="1.3" fill="#e8c050" opacity="0.43"/><rect x="23.0" y="1.2" width="1.3" height="1.3" fill="#e8c050" opacity="0.76"/><rect x="2.3" y="16.4" width="1.3" height="1.3" fill="#f0d070" opacity="0.46"/><rect x="34.1" y="14.8" width="1.3" height="1.3" fill="#e8c050" opacity="0.83"/><rect x="27.0" y="19.7" width="1.3" height="1.3" fill="#c89040" opacity="0.41"/><rect x="7.3" y="3.1" width="1.3" height="1.3" fill="#e8c050" opacity="0.87"/><rect x="32.5" y="20.9" width="1.3" height="1.3" fill="#e8c050" opacity="0.80"/><rect x="22.5" y="8.0" width="1.3" height="1.3" fill="#e8c050" opacity="0.42"/><rect x="28.3" y="17.9" width="1.3" height="1.3" fill="#f0d070" opacity="0.53"/><rect x="15.1" y="0.6" width="1.3" height="1.3" fill="#f0d070" opacity="0.86"/><rect x="1.7" y="21.0" width="1.3" height="1.3" fill="#f0d070" opacity="0.77"/><rect x="21.5" y="13.2" width="1.3" height="1.3" fill="#f0d070" opacity="0.69"/><rect x="1.1" y="11.4" width="1.3" height="1.3" fill="#c89040" opacity="0.64"/><rect x="3.5" y="13.0" width="1.3" height="1.3" fill="#e8c050" opacity="0.65"/><rect x="7.7" y="23.9" width="1.3" height="1.3" fill="#e8c050" opacity="0.67"/><rect x="10.2" y="12.1" width="1.3" height="1.3" fill="#d8a840" opacity="0.51"/><rect x="26.8" y="1.5" width="1.3" height="1.3" fill="#f0d070" opacity="0.62"/><rect x="17.5" y="22.1" width="1.3" height="1.3" fill="#d8a840" opacity="0.88"/><rect x="21.2" y="26.5" width="1.3" height="1.3" fill="#f0d070" opacity="0.67"/><rect x="5.7" y="22.6" width="1.3" height="1.3" fill="#d8a840" opacity="0.62"/><rect x="3.9" y="17.6" width="1.3" height="1.3" fill="#e8c050" opacity="0.62"/><rect x="35.4" y="15.5" width="1.3" height="1.3" fill="#e8c050" opacity="0.70"/></pattern><pattern id="p9" width="37" height="29" patternUnits="userSpaceOnUse"><rect x="12.7" y="11.2" width="1.2" height="1.2" fill="#80d0f0" opacity="0.84"/><rect x="26.7" y="11.7" width="1.2" height="1.2" fill="#c8c8e0" opacity="0.55"/><rect x="10.9" y="11.9" width="1.2" height="1.2" fill="#50a8c8" opacity="0.63"/><rect x="13.6" y="24.6" width="1.2" height="1.2" fill="#a0a8d0" opacity="0.87"/><rect x="4.5" y="16.5" width="1.2" height="1.2" fill="#50a8c8" opacity="0.71"/><rect x="12.5" y="9.1" width="1.2" height="1.2" fill="#a0a8d0" opacity="0.83"/><rect x="16.1" y="15.4" width="1.2" height="1.2" fill="#60c8e0" opacity="0.44"/><rect x="15.7" y="21.5" width="1.2" height="1.2" fill="#50a8c8" opacity="0.48"/></pattern><pattern id="p10" width="37" height="29" patternUnits="userSpaceOnUse"><rect x="12.0" y="17.9" width="1.2" height="1.2" fill="#c8c8e0" opacity="0.63"/><rect x="9.6" y="21.0" width="1.2" height="1.2" fill="#c8c8e0" opacity="0.75"/><rect x="34.9" y="20.1" width="1.2" height="1.2" fill="#a0a8d0" opacity="0.44"/><rect x="11.7" y="5.3" width="1.2" height="1.2" fill="#c8c8e0" opacity="0.44"/><rect x="23.6" y="5.4" width="1.2" height="1.2" fill="#c8c8e0" opacity="0.89"/><rect x="28.5" y="20.4" width="1.2" height="1.2" fill="#a0a8d0" opacity="0.50"/><rect x="3.9" y="25.3" width="1.2" height="1.2" fill="#a0a8d0" opacity="0.46"/><rect x="13.9" y="0.9" width="1.2" height="1.2" fill="#a0a8d0" opacity="0.82"/><rect x="15.6" y="6.2" width="1.2" height="1.2" fill="#a0a8d0" opacity="0.60"/><rect x="5.1" y="16.8" width="1.2" height="1.2" fill="#a0a8d0" opacity="0.35"/></pattern><pattern id="p11" width="37" height="29" patternUnits="userSpaceOnUse"><rect x="8.6" y="23.4" width="1.6" height="1.6" fill="#d8a840" opacity="0.82"/><rect x="23.6" y="17.9" width="1.6" height="1.6" fill="#80d0f0" opacity="0.72"/><rect x="22.7" y="12.4" width="1.6" height="1.6" fill="#e8c050" opacity="0.49"/><rect x="24.8" y="24.5" width="1.6" height="1.6" fill="#80d0f0" opacity="0.78"/><rect x="25.2" y="17.3" width="1.6" height="1.6" fill="#50a8c8" opacity="0.82"/><rect x="17.1" y="0.5" width="1.6" height="1.6" fill="#d8a840" opacity="0.64"/></pattern></defs><rect width="759" height="391" fill="url(#sky)"/><ellipse cx="560" cy="250" rx="260" ry="110" fill="url(#glowb)"/><ellipse cx="210" cy="240" rx="110" ry="70" fill="url(#glowp)" opacity=".25"/><rect x="0" y="250" width="150" height="45" fill="#2c2c4a" opacity=".35"/><rect x="560" y="215" width="90" height="80" fill="#30305a" opacity=".6"/><rect x="700" y="161" width="59" height="140" fill="url(#bh)"/><rect x="643" y="196" width="57" height="105" fill="url(#bh)" opacity=".8"/><rect x="700" y="161" width="59" height="139" fill="url(#p0)"/><rect x="643" y="196" width="57" height="104" fill="url(#p1)"/><rect x="347" y="148" width="48" height="150" fill="#2e2640"/><g opacity=".55"><rect x="347" y="148" width="48" height="150" fill="url(#p2)"/></g><rect x="406" y="119" width="41" height="180" fill="#1f1d30"/><rect x="406" y="119" width="41" height="180" fill="url(#p3)"/><ellipse cx="417" cy="167" rx="22" ry="7" fill="url(#glowo)"/><path d="M406 167H428" stroke="#f8b060" stroke-width="2.5" stroke-dasharray="2 1"/><rect x="453" y="208" width="51" height="92" fill="#2a2c4a"/><rect x="453" y="208" width="51" height="92" fill="url(#p4)"/><rect x="458" y="216" width="8" height="3" fill="#fff"/><ellipse cx="462" cy="217" rx="14" ry="9" fill="#fff" opacity=".15"/><rect x="519" y="200" width="38" height="60" fill="#34386a"/><rect x="519" y="200" width="38" height="60" fill="url(#p5)"/><rect x="519" y="252" width="63" height="50" fill="#1b1d2e"/><rect x="519" y="258" width="63" height="42" fill="url(#p6)"/><ellipse cx="560" cy="258" rx="40" ry="15" fill="url(#glowt)"/><path d="M551 257.5H577" stroke="#b0f8f0" stroke-width="3" stroke-dasharray="2.4 1.2"/><rect x="520" y="256" width="4" height="3" fill="#a0f0f0"/><ellipse cx="172" cy="229" rx="28" ry="18" fill="url(#glowp)"/><ellipse cx="240" cy="229" rx="32" ry="18" fill="url(#glowp)"/><path d="M159 226 L166 216 L250 216 L257 226 L257 300 L159 300Z" fill="#251f30"/><rect x="160" y="232" width="97" height="68" fill="url(#p7)"/><path d="M163 229.5H185M225 229.5H255" stroke="#ff7098" stroke-width="3" stroke-dasharray="2.4 1.4"/><rect x="308" y="192" width="61" height="108" fill="#1f2236"/><rect x="308" y="206" width="61" height="94" fill="url(#p8)"/><ellipse cx="350" cy="203" rx="35" ry="14" fill="url(#glowp)"/><path d="M336 202.5H368" stroke="#ff7098" stroke-width="3" stroke-dasharray="2.4 1.4"/><ellipse cx="283" cy="274" rx="35" ry="9" fill="url(#glowo)"/><rect x="257" y="273" width="50" height="2" fill="#f0a060"/><ellipse cx="323" cy="292" rx="30" ry="11" fill="url(#glowt)"/><path d="M310 291.5H340" stroke="#b0f8f0" stroke-width="3" stroke-dasharray="2.4 1.2"/><ellipse cx="700" cy="300" rx="70" ry="30" fill="url(#glowy)" opacity=".7"/><g opacity=".6"><rect x="0" y="250" width="150" height="40" fill="url(#p9)"/></g><g opacity=".6"><rect x="60" y="265" width="100" height="25" fill="url(#p10)"/></g><rect x="0" y="290" width="142" height="12" fill="#1a1a24"/><rect x="0" y="287" width="14" height="6" fill="#1e1e30"/><rect x="15" y="281" width="30" height="10" fill="#08080a"/><rect x="88" y="282" width="5" height="9" fill="#08080a"/><rect x="116" y="283" width="6" height="8" fill="#15151c"/><rect x="0" y="300" width="759" height="91" fill="url(#lowcity)"/><rect x="185" y="300" width="70" height="60" fill="#283050" opacity=".6"/><rect x="440" y="305" width="80" height="70" fill="#242a40" opacity=".5"/><rect x="655" y="300" width="95" height="70" fill="#5a5060" opacity=".35"/><g opacity=".5"><rect x="0" y="305" width="759" height="80" fill="url(#p11)"/></g><path d="M361 356 V290 H366 V356" fill="none" stroke="#e8f0ff" stroke-width="1.6"/><ellipse cx="363" cy="300" rx="10" ry="20" fill="#fff" opacity=".1"/><rect x="0" y="304" width="759" height="6" fill="#050508"/><rect x="0" y="327" width="759" height="4" fill="#050508"/><rect x="0" y="359" width="759" height="4" fill="#050508"/><rect x="0" y="381" width="759" height="10" fill="#050508"/><rect x="0" y="304" width="8" height="87" fill="#050508"/><rect x="154" y="304" width="8" height="87" fill="#050508"/><rect x="326" y="304" width="9" height="87" fill="#050508"/><rect x="481" y="304" width="8" height="87" fill="#050508"/><rect x="652" y="304" width="8" height="87" fill="#050508"/><rect x="745" y="283" width="14" height="108" fill="#050508"/><path d="M392.8 242.7 C399 243 404 247 405.5 254 C407 260 407 266 405 272 C404 276 404 279 406 283 C410 288 412 295 412 310 C412 330 408 350 405 367 L404 391 L378 391 C376 375 370 360 368 345 C366 325 366 305 370 295 C373 288 376 282 377 277 L372 270 C374 266 375 260 376 253 C378 246 385 242.5 392.8 242.7Z" fill="#030305"/><text x="705" y="362" font-family="Liberation Sans" font-weight="bold" font-size="10" fill="#fff">by</text><text x="704" y="377" font-family="Liberation Sans" font-weight="bold" font-size="10.5" fill="#fff" letter-spacing="-.3">AriArts</text></svg></div>
<div class="abs" style="left:530px;top:714px;width:487px;height:214px;border:1px solid #e4e7ed;border-radius:6px"></div>
<div class="abs" style="left:541px;top:726px;font-size:14px;font-weight:bold;line-height:16px;color:#303133">附件列表</div>
<div class="abs" style="left:905px;top:726px;width:100px;text-align:right;font-size:14px;line-height:16px;color:#303133">共 4 个</div>
<div class="att" style="top:751px"><svg class="ic" style="top:6px" width="17" height="21" viewBox="0 0 17 21" fill="none" stroke="#333" stroke-width="1.3" stroke-linecap="round" stroke-linejoin="round"><path d="M3.4 18H2.8A1.4 1.4 0 0 1 1.4 16.6V3.2A1.4 1.4 0 0 1 2.8 1.8H10.8L14.6 5.7V16.6A1.4 1.4 0 0 1 13.2 18H11.2"/><path d="M6.4 4.3h.8M6.4 6.8h.8M6.4 9.3h.8M6.4 11.8h.8M8.6 2.9h.8M8.6 5.4h.8M8.6 8.2h.8M8.6 10.7h.8M8.6 13.2h.8" stroke-width="1.1"/><path d="M5.8 19.3V16.5L7.5 14.6L9.2 16.5V19.3Z"/></svg><div class="n">cloud-mail-demo-1.0.0.zip</div><div class="s" style="right:41px">1.84 MB</div><svg class="dl" width="17" height="17" viewBox="0 0 17 17" fill="none" stroke="#9aa0a8" stroke-width="1.3"><path d="M8.5 0.6v11.4M3.8 7.3l4.7 4.7 4.7-4.7M0.8 15.4h15.4" stroke-linecap="round"/></svg></div>
<div class="att" style="top:795px"><svg class="ic" width="17" height="17" viewBox="0 0 17 17" fill="none" stroke="#333" stroke-width="1.4" stroke-linejoin="round"><rect x="0.7" y="1.3" width="14.6" height="13.3" rx="1.2"/><path d="M0.8 11.6L6.3 6.4L11 11.2L12.2 9.4L15.2 12.2"/><circle cx="11" cy="4.9" r="1" fill="#333" stroke="none"/></svg><div class="n">D133D468@F095A914.353F2368.png</div><div class="s" style="right:71px">3.68 MB</div><svg class="eye" width="21" height="16" viewBox="0 0 21 16" fill="none" stroke="#68717b" stroke-width="1.4"><path d="M1 8C3.5 3.5 7 1.5 10.5 1.5S17.5 3.5 20 8c-2.5 4.5-6 6.5-9.5 6.5S3.5 12.5 1 8z"/><circle cx="10.5" cy="8" r="2.8"/></svg><svg class="dl" width="17" height="17" viewBox="0 0 17 17" fill="none" stroke="#9aa0a8" stroke-width="1.3"><path d="M8.5 0.6v11.4M3.8 7.3l4.7 4.7 4.7-4.7M0.8 15.4h15.4" stroke-linecap="round"/></svg></div>
<div class="att" style="top:839px"><svg class="ic" width="17" height="17" viewBox="0 0 17 17" fill="none" stroke="#333" stroke-width="1.4" stroke-linejoin="round"><rect x="0.7" y="1.3" width="14.6" height="13.3" rx="1.2"/><path d="M0.8 11.6L6.3 6.4L11 11.2L12.2 9.4L15.2 12.2"/><circle cx="11" cy="4.9" r="1" fill="#333" stroke="none"/></svg><div class="n">hero-background-campaign-alternate.png</div><div class="s" style="right:71px">514.65 KB</div><svg class="eye" width="21" height="16" viewBox="0 0 21 16" fill="none" stroke="#68717b" stroke-width="1.4"><path d="M1 8C3.5 3.5 7 1.5 10.5 1.5S17.5 3.5 20 8c-2.5 4.5-6 6.5-9.5 6.5S3.5 12.5 1 8z"/><circle cx="10.5" cy="8" r="2.8"/></svg><svg class="dl" width="17" height="17" viewBox="0 0 17 17" fill="none" stroke="#9aa0a8" stroke-width="1.3"><path d="M8.5 0.6v11.4M3.8 7.3l4.7 4.7 4.7-4.7M0.8 15.4h15.4" stroke-linecap="round"/></svg></div>
<div class="att" style="top:883px"><svg class="ic" style="top:6px" width="17" height="21" viewBox="0 0 17 21" fill="none" stroke="#333" stroke-width="1.3" stroke-linecap="round" stroke-linejoin="round"><path d="M10.2 1.8H4.2A2.6 2.6 0 0 0 1.6 4.4V15.4A2.6 2.6 0 0 0 4.2 18H11.7A2.6 2.6 0 0 0 14.3 15.4V5.9Z"/><path d="M10.2 1.8V4.2A1.6 1.6 0 0 0 11.8 5.8H14.3"/><path d="M4.1 9.1h7.8M4.1 11.5h7.8M4.1 14.6h4.5"/></svg><div class="n">散文片段_时间与记忆.txt</div><div class="s" style="right:41px">2.34 KB</div><svg class="dl" width="17" height="17" viewBox="0 0 17 17" fill="none" stroke="#9aa0a8" stroke-width="1.3"><path d="M8.5 0.6v11.4M3.8 7.3l4.7 4.7 4.7-4.7M0.8 15.4h15.4" stroke-linecap="round"/></svg></div>


</body></html>
